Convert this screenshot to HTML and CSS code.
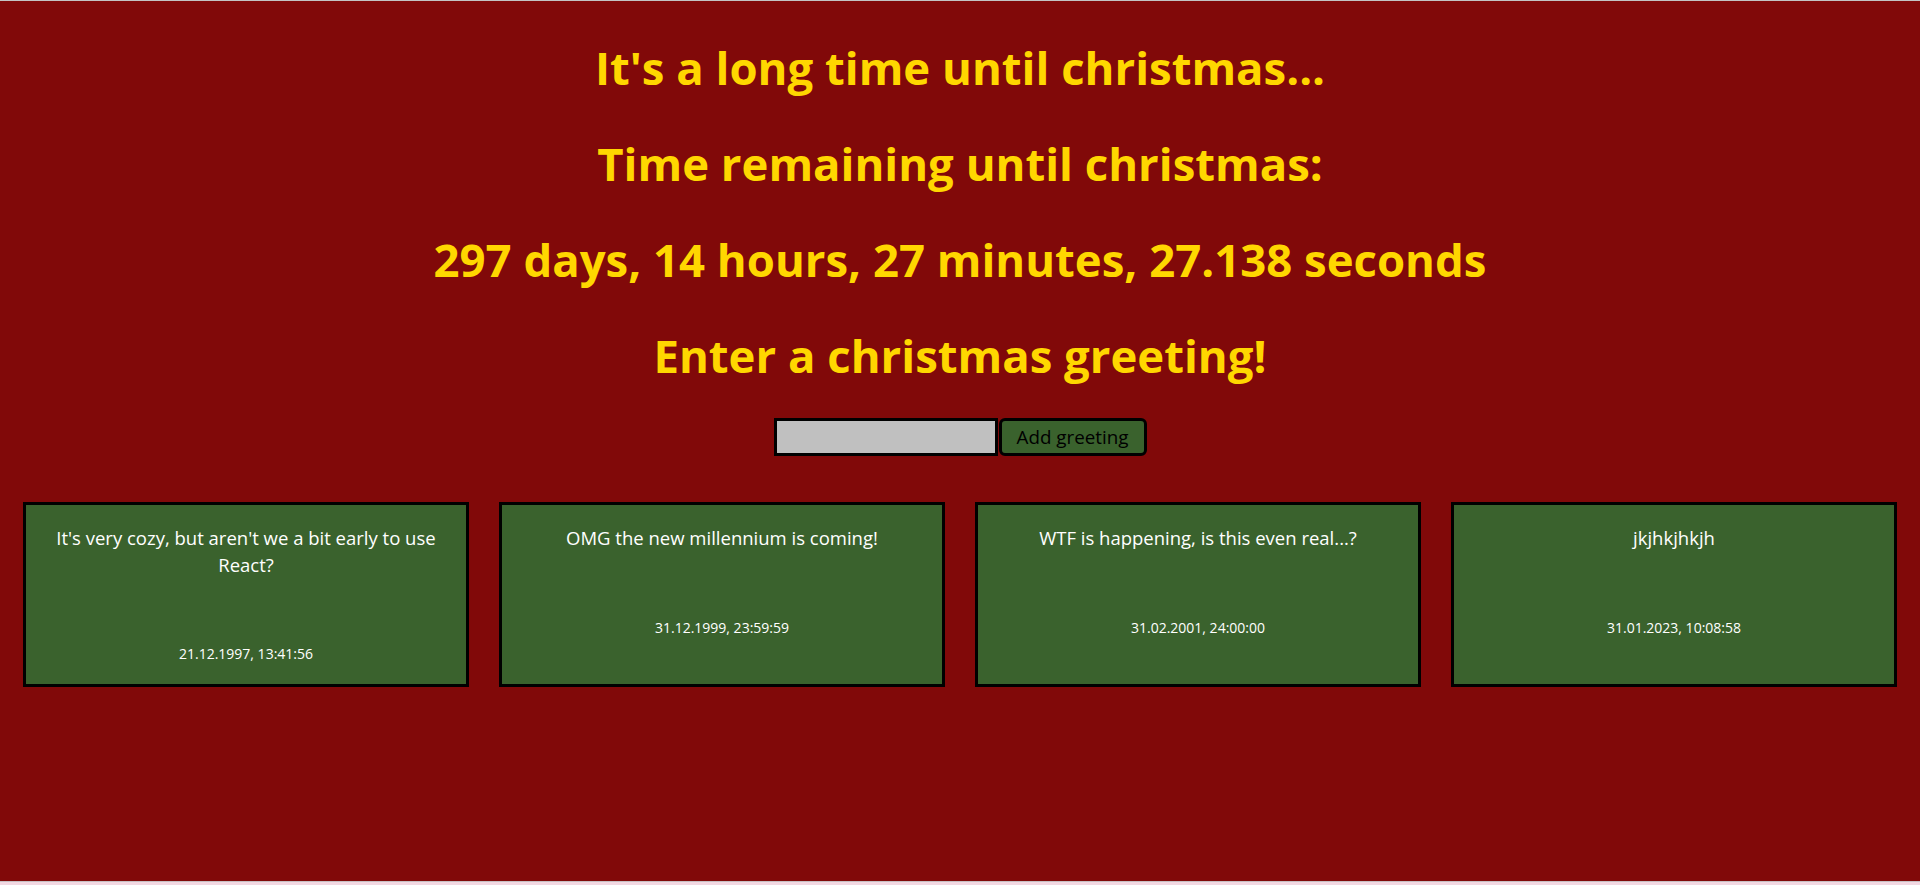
FILE: index.html
```html
<!DOCTYPE html>
<html lang="en">
<head>
<meta charset="utf-8">
<title>Christmas countdown</title>
<link rel="stylesheet" href="styles.css">
</head>
<body>
<div class="page">
  <header class="titles">
    <h1 class="title">It's a long time until christmas...</h1>
    <h1 class="title">Time remaining until christmas:</h1>
    <h1 class="title">297 days, 14 hours, 27 minutes, 27.138 seconds</h1>
    <h1 class="title">Enter a christmas greeting!</h1>
  </header>
  <form class="greet-form">
    <input class="greet-input" type="text">
    <button class="greet-button" type="button">Add greeting</button>
  </form>
  <section class="cards">
    <div class="card">
      <p class="card-text">It's very cozy, but aren't we a bit early to use React?</p>
      <p class="card-date">21.12.1997, 13:41:56</p>
    </div>
    <div class="card">
      <p class="card-text">OMG the new millennium is coming!</p>
      <p class="card-date">31.12.1999, 23:59:59</p>
    </div>
    <div class="card">
      <p class="card-text">WTF is happening, is this even real...?</p>
      <p class="card-date">31.02.2001, 24:00:00</p>
    </div>
    <div class="card">
      <p class="card-text">jkjhkjhkjh</p>
      <p class="card-date">31.01.2023, 10:08:58</p>
    </div>
  </section>
</div>
</body>
</html>
```
FILE: styles.css
```css
html {
  background: #f2d8e2;
}
body {
  margin: 0;
  font-family: "Open Sans", "Noto Sans", sans-serif;
}
.page {
  box-sizing: border-box;
  height: 882px;
  background: #810909;
  border-top: 1px solid #c4c4c4;
  border-bottom: 1px solid #c8c0c4;
}
.titles {
  display: flex;
  flex-direction: column;
  gap: 32px;
  padding-top: 34px;
}
.title {
  margin: 0;
  color: #ffd700;
  font-size: 45.5px;
  line-height: 64px;
  font-weight: 700;
  text-align: center;
}
.greet-form {
  display: flex;
  justify-content: center;
  gap: 1px;
  margin: 31px 0 0;
}
.greet-input {
  box-sizing: border-box;
  width: 224px;
  height: 38px;
  margin: 0;
  padding: 0 4px;
  border: 3px solid #000;
  border-radius: 0;
  background: #c0c0c0;
  font: 18px "Open Sans", sans-serif;
}
.greet-button {
  box-sizing: border-box;
  width: 148px;
  height: 38px;
  margin: 0;
  padding: 0;
  border: 3px solid #000;
  border-radius: 6px;
  background: #3a622d;
  color: #000;
  font: 18.8px "Open Sans", sans-serif;
}
.cards {
  display: grid;
  grid-template-columns: repeat(4, 1fr);
  gap: 30px;
  padding: 0 23px;
  margin-top: 46px;
}
.card {
  border: 3px solid #000;
  background: #3a622d;
  color: #fff;
  text-align: center;
}
.card-text {
  margin: 20px 0 0;
  padding: 0 10px;
  font-size: 18.5px;
  line-height: 26.6px;
}
.card-date {
  margin: 65px 0 20px;
  font-size: 14px;
  line-height: 21.3px;
}
```
